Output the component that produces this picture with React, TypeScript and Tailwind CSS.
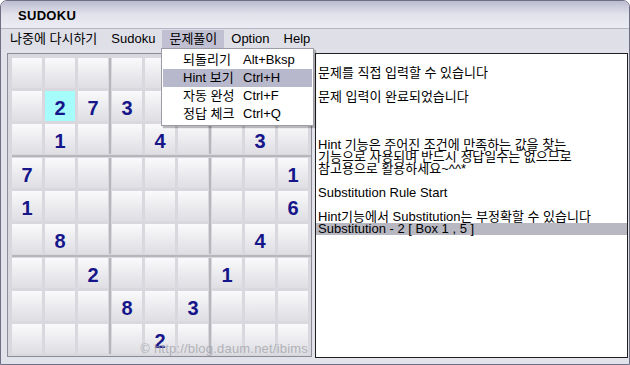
import React from "react";

const board: (number | null)[][] = [
  [null, null, null, null, null, null, null, null, null],
  [null, 2, 7, 3, null, null, null, null, null],
  [null, 1, null, null, 4, null, null, 3, null],
  [7, null, null, null, null, null, null, null, 1],
  [1, null, null, null, null, null, null, null, 6],
  [null, 8, null, null, null, null, null, 4, null],
  [null, null, 2, null, null, null, 1, null, null],
  [null, null, null, 8, null, 3, null, null, null],
  [null, null, null, null, 2, null, null, null, null],
];

const menus = ["나중에 다시하기", "Sudoku", "문제풀이", "Option", "Help"];

const dropdown = [
  { label: "되돌리기", key: "Alt+Bksp" },
  { label: "Hint 보기", key: "Ctrl+H", active: true },
  { label: "자동 완성", key: "Ctrl+F" },
  { label: "정답 체크", key: "Ctrl+Q" },
];

const logLines = [
  "",
  "문제를 직접 입력할 수 있습니다",
  "",
  "문제 입력이 완료되었습니다",
  "",
  "",
  "",
  "Hint 기능은 주어진 조건에 만족하는 값을 찾는",
  "기능으로 사용되며 반드시 정답일수는 없으므로",
  "참고용으로 활용하세요~^^*",
  "",
  "Substitution Rule Start",
  "",
  "Hint기능에서 Substitution는 부정확할 수 있습니다",
];

const font = { fontFamily: '"Liberation Sans", "Noto Sans CJK KR", sans-serif' };

function Cell({ value, hot }: { value: number | null; hot?: boolean }) {
  return (
    <div
      className={`w-[30px] h-[30px] flex items-center justify-center pt-[3px] text-[20px] font-bold text-[#16168a] ${
        hot ? "bg-[#a6fbfb]" : "bg-linear-to-b from-[#fafafc] to-[#dedee3]"
      }`}
    >
      {value ?? ""}
    </div>
  );
}

function Box({ br, bc }: { br: number; bc: number }) {
  const cells = [];
  for (let r = 0; r < 3; r++) {
    for (let c = 0; c < 3; c++) {
      const row = br * 3 + r;
      const col = bc * 3 + c;
      cells.push(
        <Cell key={`${r}-${c}`} value={board[row][col]} hot={row === 1 && col === 1} />
      );
    }
  }
  return <div className="grid grid-cols-3 gap-[3px]">{cells}</div>;
}

function VSep() {
  return (
    <div className="w-[4px] flex justify-center">
      <div className="w-[2px] bg-[#b6b6bb]" />
    </div>
  );
}

function HSep() {
  return (
    <div className="h-[4px] flex flex-col justify-center">
      <div className="h-[2px] bg-[#b6b6bb]" />
    </div>
  );
}

export default function App() {
  return (
    <div
      className="w-[630px] h-[365px] bg-[#dcdce6] border border-[#6e6e84] rounded-t-[7px] flex flex-col overflow-hidden relative"
      style={font}
    >
      {/* title */}
      <div className="h-[28px] shrink-0 bg-linear-to-b from-[#bcbcd0] via-[#e2e2ec] to-[#ececf3] border-b border-[#b4b4c4] flex items-center pl-[17px] pt-[3px]">
        <span className="text-[13px] font-bold text-black tracking-[0.3px]">SUDOKU</span>
      </div>

      {/* menu bar */}
      <div className="h-[20px] shrink-0 bg-[#dfdfe8] flex items-center pl-[2px] text-[13px] text-black">
        {menus.map((m) => (
          <div
            key={m}
            className={`h-[19px] flex items-center px-[7px] ${m === "문제풀이" ? "bg-[#c0c0d2]" : ""}`}
          >
            {m}
          </div>
        ))}
      </div>

      {/* content */}
      <div className="flex gap-[3px] pl-[6px] pt-[4px] bg-[#e2e2ea] flex-1">
        <div className="relative w-[305px] h-[304px] border border-[#8c8c98] bg-[#d8d8de] pl-[4px] pt-[4px]">
          {[0, 1, 2].map((br) => (
            <React.Fragment key={br}>
              {br > 0 && <HSep />}
              <div className="flex">
                <Box br={br} bc={0} />
                <VSep />
                <Box br={br} bc={1} />
                <VSep />
                <Box br={br} bc={2} />
              </div>
            </React.Fragment>
          ))}
          <div className="absolute right-[3px] bottom-[-2px] text-[13px] text-[#a2a2aa] opacity-75 tracking-[0.2px]">
            © http://blog.daum.net/ibims
          </div>
        </div>

        <div className="w-[313px] h-[305px] border border-[#202020] bg-white pt-[1px] text-[13px] leading-[12px] text-black">
          {logLines.map((l, i) => (
            <div key={i} className="h-[12px] pl-[2px] whitespace-pre">
              {l}
            </div>
          ))}
          <div className="h-[12px] pl-[2px] bg-[#b8b8c2] whitespace-pre">Substitution - 2 [ Box 1 , 5 ]</div>
        </div>
      </div>

      {/* dropdown */}
      <div className="absolute left-[160px] top-[47px] w-[153px] bg-white border border-[#9c9ca8] shadow-[2px_2px_1px_rgba(0,0,0,0.25)] py-[2px] px-[1px] text-[13px] text-black">
        {dropdown.map((d) => (
          <div
            key={d.label}
            className={`h-[18px] flex items-center pl-[20px] ${d.active ? "bg-[#b8b8cc]" : ""}`}
          >
            <span className="w-[60px]">{d.label}</span>
            <span>{d.key}</span>
          </div>
        ))}
      </div>
    </div>
  );
}
